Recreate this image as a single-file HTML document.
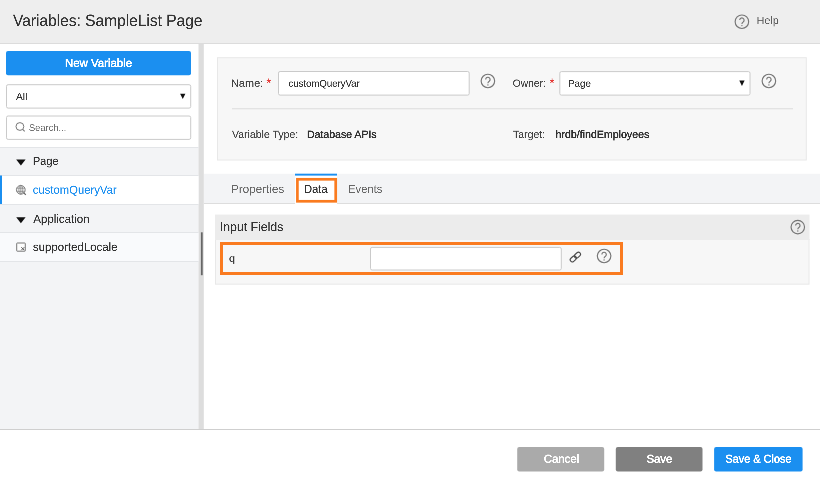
<!DOCTYPE html>
<html><head><meta charset="utf-8">
<style>
*{box-sizing:border-box;margin:0;padding:0}
html,body{width:820px;height:489px;overflow:hidden;background:#fff;font-family:"Liberation Sans",sans-serif}
.t{position:absolute;left:0;top:0;white-space:nowrap;line-height:1;transform-origin:0 0;display:block;will-change:transform}
#g{position:absolute;left:0;top:0}
</style></head><body>
<svg id="g" width="820" height="489" viewBox="0 0 820 489">
<defs>
<g id="hp"><circle cx="0" cy="0" r="6.75" fill="none" stroke="#757575" stroke-width="1.15"/><path d="M-2.2 -1.6a2.2 2.2 0 1 1 3.5 1.8c-.9.6-1.3 1-1.3 2" fill="none" stroke="#757575" stroke-width="1.15"/><circle cx="0" cy="3.9" r=".7" fill="#757575"/></g>
</defs>
<!-- header -->
<rect x="0" y="0" width="820" height="43.4" fill="#eeeeee"/>
<rect x="0" y="43" width="820" height="1" fill="#dcdcdc"/>
<use href="#hp" x="741.9" y="21.7"/>
<!-- sidebar -->
<rect x="0" y="147" width="198.5" height="282" fill="#f3f4f6"/>
<rect x="198.5" y="44" width="5.3" height="385" fill="#dddddd"/>
<rect x="200.9" y="232.3" width="1.8" height="42.9" fill="#666"/>
<rect x="6" y="51" width="185" height="24.3" rx="2" fill="#1b8ff0"/>
<rect x="6.5" y="84.7" width="184.2" height="23.4" rx="1.6" fill="#fff" stroke="#cacaca" stroke-width="1"/>
<path d="M180.1 93.7h5.3l-2.65 5.4z" fill="#111"/>
<rect x="6.5" y="116" width="184.2" height="23.4" rx="1.6" fill="#fff" stroke="#cacaca" stroke-width="1"/>
<g fill="none" stroke="#777" stroke-width="1"><circle cx="19.9" cy="126.5" r="3.9"/><path d="M22.7 129.3l2 2" stroke-width="1.1"/></g>
<rect x="0" y="147" width="198.5" height="1" fill="#e3e5e8"/>
<path d="M16.2 159.5h9.4l-4.7 6z" fill="#111"/>
<rect x="0" y="175" width="198.5" height="1" fill="#e3e5e8"/>
<rect x="0" y="176" width="198.5" height="28" fill="#ffffff"/>
<rect x="0" y="175.5" width="2" height="28.8" fill="#1b8ff0"/>
<g transform="translate(15.8 184.8)"><circle cx="5" cy="5" r="4.4" fill="#efefef" stroke="#777" stroke-width=".9"/><ellipse cx="5" cy="5" rx="2" ry="4.4" fill="none" stroke="#808080" stroke-width=".7"/><path d="M.8 3.4h8.4M.8 6.6h8.4M5 .6v8.8" stroke="#808080" stroke-width=".7" fill="none"/><path d="M7.7 7.7l2.3 2.3" stroke="#666" stroke-width="1.2"/></g>
<rect x="0" y="204" width="198.5" height="1" fill="#e3e5e8"/>
<path d="M16.2 217.2h9.4l-4.7 6z" fill="#111"/>
<rect x="0" y="232" width="198.5" height="1" fill="#e3e5e8"/>
<rect x="0" y="233" width="198.5" height="28" fill="#f9fafc"/>
<g transform="translate(16.2 242.5)"><rect x=".5" y=".5" width="8.6" height="8.2" rx=".5" fill="#fdfdfd" stroke="#777" stroke-width="1"/><path d="M5.1 4.7l3 3M8.1 4.7l-3 3" stroke="#555" stroke-width="1"/></g>
<rect x="0" y="261" width="198.5" height="1" fill="#e3e5e8"/>
<!-- panel -->
<rect x="217.5" y="57.7" width="588.8" height="102.3" fill="#f7f7f7" stroke="#e8e8e8" stroke-width="1"/>
<rect x="278.5" y="71.5" width="190.7" height="23.6" rx="1.6" fill="#fff" stroke="#cacaca" stroke-width="1"/>
<rect x="559.8" y="71.6" width="190.2" height="23.5" rx="1.6" fill="#fff" stroke="#cacaca" stroke-width="1"/>
<path d="M739.3 80.5h5.3l-2.65 5.4z" fill="#111"/>
<use href="#hp" x="487.9" y="81"/>
<use href="#hp" x="768.9" y="81"/>
<rect x="232" y="108.1" width="561" height="1.2" fill="#e0e0e0"/>
<!-- tabs -->
<rect x="204" y="173.8" width="616" height="29.4" fill="#f3f4f6"/>
<rect x="204" y="203" width="616" height="1" fill="#dddddd"/>
<rect x="295" y="174" width="42" height="30" fill="#fff"/>
<rect x="295" y="173.7" width="42" height="1.9" fill="#1b8ff0"/>
<rect x="297.4" y="179.3" width="38.3" height="22" fill="none" stroke="#fa7b20" stroke-width="2.7"/>
<!-- input fields -->
<rect x="215" y="214.6" width="594.5" height="25" fill="#ececec"/>
<rect x="215.5" y="239.5" width="593.5" height="44.7" fill="#f7f7f7" stroke="#e8e8e8" stroke-width="1"/>
<rect x="215" y="239" width="594.5" height="1" fill="#ececec"/>
<use href="#hp" x="797.8" y="227.1"/>
<rect x="370.5" y="247.4" width="190.8" height="22.6" rx="1.6" fill="#fff" stroke="#cacaca" stroke-width="1"/>
<rect x="221.5" y="243.5" width="400" height="30" fill="none" stroke="#fa7b20" stroke-width="3"/>
<g transform="translate(575.35 257.05) rotate(-42)" fill="none" stroke="#4a4a4a" stroke-width="1.1"><rect x="-6.2" y="-2.1" width="6.8" height="4.2" rx="2.1"/><rect x="-0.6" y="-2.1" width="6.8" height="4.2" rx="2.1"/></g>
<use href="#hp" x="604.1" y="256"/>
<!-- footer -->
<rect x="0" y="429" width="820" height="1" fill="#cfcfcf"/>
<rect x="517.2" y="447" width="87" height="24.6" rx="2" fill="#aaaaaa"/>
<rect x="615.8" y="447" width="86.7" height="24.6" rx="2" fill="#808080"/>
<rect x="714.1" y="447" width="88.5" height="24.6" rx="2" fill="#1b8ff0"/>
</svg>
<span class="t" style="font-size:64.04px;color:#333;transform:translate(13.00px,12.45px) scale(0.24231,0.25);-webkit-text-stroke:0.40px #333;">Variables: SampleList Page</span>
<span class="t" style="font-size:42.69px;color:#5e5e5e;transform:translate(756.59px,15.07px) scale(0.25339,0.25);">Help</span>
<span class="t" style="font-size:46.25px;color:#fff;transform:translate(65.01px,57.21px) scale(0.24678,0.25);-webkit-text-stroke:2.00px #fff;">New Variable</span>
<span class="t" style="font-size:39.13px;color:#333;transform:translate(16.00px,91.62px) scale(0.26000,0.25);-webkit-text-stroke:0.40px #333;">All</span>
<span class="t" style="font-size:39.13px;color:#707070;transform:translate(28.90px,122.72px) scale(0.23880,0.25);">Search...</span>
<span class="t" style="font-size:46.25px;color:#333;transform:translate(32.85px,155.21px) scale(0.23791,0.25);-webkit-text-stroke:0.40px #333;">Page</span>
<span class="t" style="font-size:46.25px;color:#1b8ff0;transform:translate(32.79px,184.01px) scale(0.24400,0.25);-webkit-text-stroke:0.40px #1b8ff0;">customQueryVar</span>
<span class="t" style="font-size:46.25px;color:#333;transform:translate(33.30px,213.11px) scale(0.24866,0.25);-webkit-text-stroke:0.40px #333;">Application</span>
<span class="t" style="font-size:46.25px;color:#333;transform:translate(32.93px,241.16px) scale(0.24728,0.25);-webkit-text-stroke:0.40px #333;">supportedLocale</span>
<span class="t" style="font-size:42.69px;color:#444;transform:translate(230.97px,77.77px) scale(0.25652,0.25);-webkit-text-stroke:0.40px #444;">Name:</span>
<span class="t" style="font-size:49.81px;color:#e53935;transform:translate(266.46px,77.06px) scale(0.23962,0.25);-webkit-text-stroke:0.40px #e53935;">*</span>
<span class="t" style="font-size:39.13px;color:#333;transform:translate(288.50px,78.52px) scale(0.24496,0.25);-webkit-text-stroke:0.40px #333;">customQueryVar</span>
<span class="t" style="font-size:42.69px;color:#444;transform:translate(512.68px,77.77px) scale(0.24096,0.25);-webkit-text-stroke:0.40px #444;">Owner:</span>
<span class="t" style="font-size:49.81px;color:#e53935;transform:translate(549.66px,77.06px) scale(0.23962,0.25);-webkit-text-stroke:0.40px #e53935;">*</span>
<span class="t" style="font-size:39.13px;color:#333;transform:translate(568.00px,78.52px) scale(0.25076,0.25);-webkit-text-stroke:0.40px #333;">Page</span>
<span class="t" style="font-size:42.69px;color:#444;transform:translate(232.00px,128.97px) scale(0.24621,0.25);-webkit-text-stroke:0.40px #444;">Variable Type:</span>
<span class="t" style="font-size:42.69px;color:#333;transform:translate(307.01px,128.97px) scale(0.24638,0.25);-webkit-text-stroke:1.44px #333;">Database APIs</span>
<span class="t" style="font-size:42.69px;color:#444;transform:translate(513.00px,128.97px) scale(0.24609,0.25);-webkit-text-stroke:0.40px #444;">Target:</span>
<span class="t" style="font-size:42.69px;color:#333;transform:translate(555.49px,128.97px) scale(0.24870,0.25);-webkit-text-stroke:1.44px #333;">hrdb/findEmployees</span>
<span class="t" style="font-size:46.25px;color:#666;transform:translate(230.99px,183.21px) scale(0.25245,0.25);">Properties</span>
<span class="t" style="font-size:46.25px;color:#333;transform:translate(304.04px,183.21px) scale(0.24105,0.25);-webkit-text-stroke:0.40px #333;">Data</span>
<span class="t" style="font-size:46.25px;color:#666;transform:translate(348.03px,183.21px) scale(0.24265,0.25);">Events</span>
<span class="t" style="font-size:49.81px;color:#333;transform:translate(219.81px,220.86px) scale(0.24683,0.25);-webkit-text-stroke:0.40px #333;">Input Fields</span>
<span class="t" style="font-size:39.13px;color:#333;transform:translate(229.00px,253.42px) scale(0.27500,0.25);-webkit-text-stroke:0.40px #333;">q</span>
<span class="t" style="font-size:46.25px;color:#fff;transform:translate(543.83px,453.01px) scale(0.24553,0.25);-webkit-text-stroke:2.00px #fff;">Cancel</span>
<span class="t" style="font-size:46.25px;color:#fff;transform:translate(646.58px,453.01px) scale(0.24349,0.25);-webkit-text-stroke:2.00px #fff;">Save</span>
<span class="t" style="font-size:46.25px;color:#fff;transform:translate(725.40px,453.01px) scale(0.23573,0.25);-webkit-text-stroke:2.00px #fff;">Save &amp; Close</span>
</body></html>
